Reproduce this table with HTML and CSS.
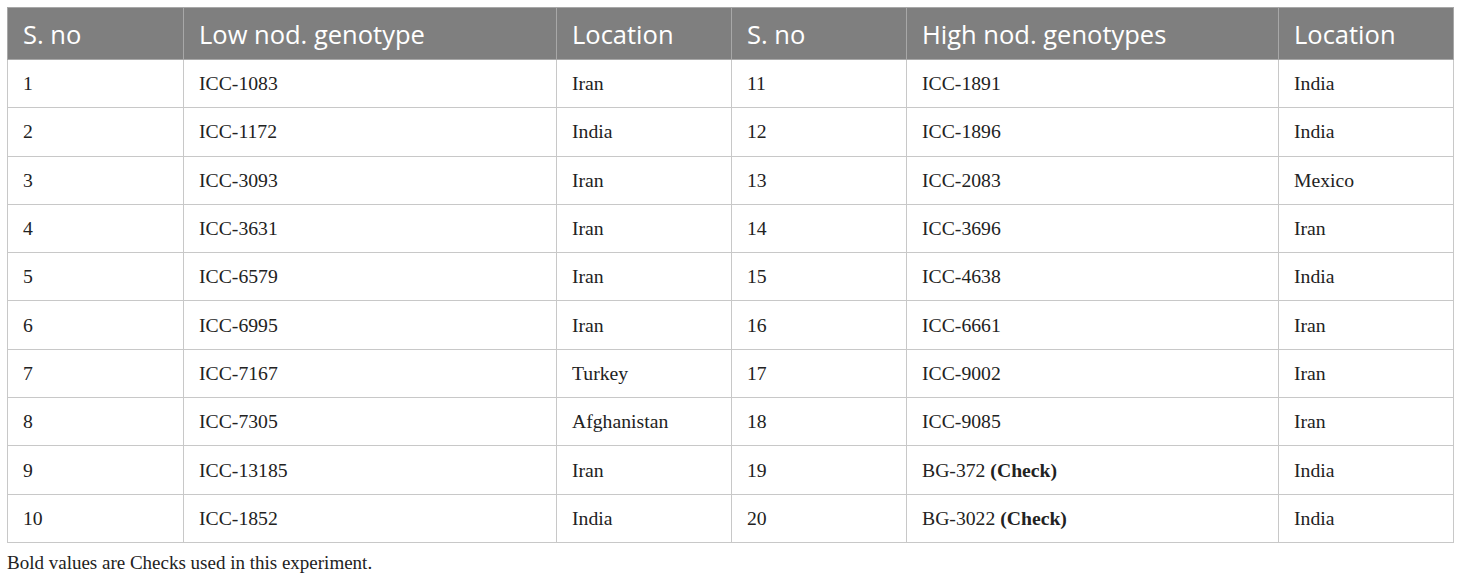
FILE: index.html
```html
<!DOCTYPE html>
<html>
<head>
<meta charset="utf-8">
<link rel="stylesheet" href="styles.css">
</head>
<body>
<div class="wrap">
<table class="tbl">
<colgroup>
<col class="c1"><col class="c2"><col class="c3"><col class="c4"><col class="c5"><col class="c6">
</colgroup>
<thead>
<tr><th>S. no</th><th>Low nod. genotype</th><th>Location</th><th>S. no</th><th>High nod. genotypes</th><th>Location</th></tr>
</thead>
<tbody>
<tr><td>1</td><td>ICC-1083</td><td>Iran</td><td>11</td><td>ICC-1891</td><td>India</td></tr>
<tr><td>2</td><td>ICC-1172</td><td>India</td><td>12</td><td>ICC-1896</td><td>India</td></tr>
<tr><td>3</td><td>ICC-3093</td><td>Iran</td><td>13</td><td>ICC-2083</td><td>Mexico</td></tr>
<tr><td>4</td><td>ICC-3631</td><td>Iran</td><td>14</td><td>ICC-3696</td><td>Iran</td></tr>
<tr><td>5</td><td>ICC-6579</td><td>Iran</td><td>15</td><td>ICC-4638</td><td>India</td></tr>
<tr><td>6</td><td>ICC-6995</td><td>Iran</td><td>16</td><td>ICC-6661</td><td>Iran</td></tr>
<tr><td>7</td><td>ICC-7167</td><td>Turkey</td><td>17</td><td>ICC-9002</td><td>Iran</td></tr>
<tr><td>8</td><td>ICC-7305</td><td>Afghanistan</td><td>18</td><td>ICC-9085</td><td>Iran</td></tr>
<tr><td>9</td><td>ICC-13185</td><td>Iran</td><td>19</td><td>BG-372 <b>(Check)</b></td><td>India</td></tr>
<tr><td>10</td><td>ICC-1852</td><td>India</td><td>20</td><td>BG-3022 <b>(Check)</b></td><td>India</td></tr>
</tbody>
</table>
<p class="note">Bold values are Checks used in this experiment.</p>
</div>
</body>
</html>
```
FILE: styles.css
```css
html, body {
  margin: 0;
  padding: 0;
  background: #ffffff;
}
.wrap {
  padding: 7px 7px 0 7px;
}
.tbl {
  border-collapse: collapse;
  table-layout: fixed;
  width: 1446px;
}
.c1 { width: 176px; }
.c2 { width: 373px; }
.c3 { width: 175px; }
.c4 { width: 175px; }
.c5 { width: 372px; }
.c6 { width: 175px; }
.tbl th {
  background: #7f7f7f;
  color: #ffffff;
  font-family: "Open Sans", "Noto Sans", sans-serif;
  font-weight: 400;
  font-size: 25.5px;
  text-align: left;
  height: 52px;
  padding: 0 15px;
  border: 1px solid #a8a8a8;
  box-sizing: border-box;
}
.tbl td {
  font-family: "Liberation Serif", "Times New Roman", serif;
  font-size: 19.7px;
  color: #222222;
  height: 48.3px;
  padding: 0 15px;
  border: 1px solid #c8c8c8;
  box-sizing: border-box;
}
.tbl td b {
  font-weight: 700;
}
.note {
  margin: 9px 0 0 0;
  font-family: "Liberation Serif", "Times New Roman", serif;
  font-size: 19px;
  color: #222222;
}
```
